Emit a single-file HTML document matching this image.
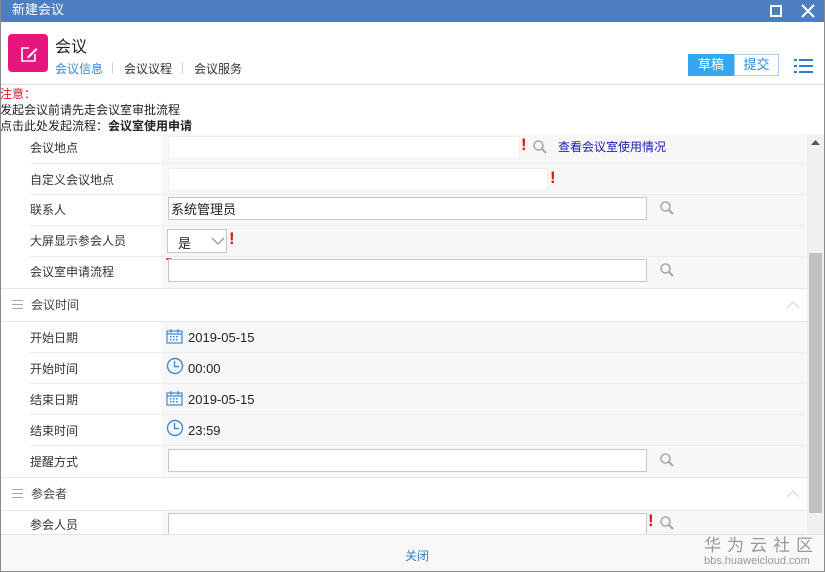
<!DOCTYPE html>
<html><head><meta charset="utf-8"><style>
*{margin:0;padding:0;box-sizing:border-box}
body{width:825px;height:572px;overflow:hidden;background:#fff;font-family:"Liberation Sans","Noto Sans CJK SC",sans-serif;font-size:12px;color:#333;position:relative}
.a{position:absolute;white-space:nowrap}
.win{position:absolute;left:0;top:0;width:825px;height:572px;border:1px solid #8a8a8a;border-top:none}
.tb{left:0;top:0;width:825px;height:22px;background:#4d7fc0;color:#fff;font-size:13px;line-height:20px;padding-left:12px}
.lbl{left:30px;font-size:12px;color:#333}
.inp{background:#fff;border:1px solid #c6c6c6;height:23px}
.ex{color:#e0141a;font-weight:bold;font-size:17px;font-family:"Liberation Sans",sans-serif}
.sep{left:30px;width:776px;height:1px;background:#ececec}
.val{left:161px;width:646px;background:#f7f7f7}
.sec{left:1px;width:806px;background:#fff;border-top:1px solid #e6e6e6;border-bottom:1px solid #e6e6e6}
.sec span{position:absolute;left:30px;top:7px;font-size:12px;color:#444}
.ham{position:absolute;left:11px;width:11px;height:1px;background:#aaa}
</style></head><body>
<div class="a tb">新建会议</div>
<svg class="a" style="left:770px;top:5px" width="12" height="12"><rect x="1" y="1" width="10" height="10" fill="none" stroke="#fff" stroke-width="2"/></svg>
<svg class="a" style="left:801px;top:4px" width="14" height="14"><path d="M1 1L13 13M13 1L1 13" stroke="#fff" stroke-width="2"/></svg>
<div class="a" style="left:8px;top:34px;width:40px;height:38px;background:#e6167e;border-radius:4px"></div>
<svg class="a" style="left:8px;top:34px" width="40" height="38"><path d="M21 14H14V27H27V20" fill="none" stroke="#fff" stroke-width="1.6"/><path d="M19 23L28 14L29.5 15.5L20.5 24.5Z" fill="#fff"/></svg>
<div class="a" style="left:55px;top:33px;font-size:16px;color:#222">会议</div>
<div class="a" style="left:55px;top:60px;font-size:12px;color:#2e8ad8">会议信息</div>
<div class="a" style="left:111px;top:60px;color:#ccc">|</div>
<div class="a" style="left:124px;top:60px;color:#333">会议议程</div>
<div class="a" style="left:181px;top:60px;color:#ccc">|</div>
<div class="a" style="left:194px;top:60px;color:#333">会议服务</div>
<div class="a" style="left:688px;top:54px;width:46px;height:22px;background:#35a7f2;color:#fff;text-align:center;line-height:21px;font-size:13px">草稿</div>
<div class="a" style="left:734px;top:54px;width:45px;height:22px;border:1px solid #a9cdea;color:#2e8ad8;text-align:center;line-height:19px;font-size:13px">提交</div>
<svg class="a" style="left:794px;top:58px" width="20" height="16"><g fill="#2e7fd0"><rect x="0" y="1" width="3" height="2"/><rect x="5" y="1" width="14" height="2"/><rect x="0" y="7" width="3" height="2"/><rect x="5" y="7" width="14" height="2"/><rect x="0" y="13" width="3" height="2"/><rect x="5" y="13" width="14" height="2"/></g></svg>
<div class="a" style="left:0;top:84px;width:825px;height:1px;background:#dcdcdc"></div>
<div class="a" style="left:0;top:85px;color:#e0141a">注意：</div>
<div class="a" style="left:0;top:101px;color:#222">发起会议前请先走会议室审批流程</div>
<div class="a" style="left:0;top:117px;color:#222">点击此处发起流程：<b>会议室使用申请</b></div>

<div class="a val" style="top:134px;height:154px"></div>
<div class="a val" style="top:322px;height:156px"></div>
<div class="a val" style="top:510px;height:25px"></div>
<div class="a sep" style="top:163px"></div><div class="a sep" style="top:194px"></div><div class="a sep" style="top:225px"></div><div class="a sep" style="top:256px"></div>
<div class="a sep" style="top:352px"></div><div class="a sep" style="top:383px"></div><div class="a sep" style="top:414px"></div><div class="a sep" style="top:445px"></div>

<div class="a lbl" style="top:139px">会议地点</div>
<div class="a inp" style="left:168px;top:136px;width:352px;border-color:#eee"></div>
<div class="a ex" style="left:521px;top:135px">!</div>
<svg class="a" style="left:533px;top:140px" width="14" height="14"><circle cx="5.5" cy="5.5" r="4.5" fill="none" stroke="#aaa" stroke-width="1.6"/><path d="M9 9L13 13" stroke="#aaa" stroke-width="2.2"/></svg>
<div class="a" style="left:558px;top:138px;color:#1a1ab8">查看会议室使用情况</div>

<div class="a lbl" style="top:171px">自定义会议地点</div>
<div class="a inp" style="left:168px;top:168px;width:380px;border-color:#eee"></div>
<div class="a ex" style="left:550px;top:168px">!</div>

<div class="a lbl" style="top:201px">联系人</div>
<div class="a inp" style="left:168px;top:197px;width:479px;padding:1px 2px;font-size:13px;color:#222">系统管理员</div>
<svg class="a" style="left:660px;top:201px" width="14" height="14"><circle cx="5.5" cy="5.5" r="4.5" fill="none" stroke="#aaa" stroke-width="1.6"/><path d="M9 9L13 13" stroke="#aaa" stroke-width="2.2"/></svg>

<div class="a lbl" style="top:232px">大屏显示参会人员</div>
<div class="a inp" style="left:167px;top:229px;width:60px;height:24px;padding:3px 10px;font-size:13px;color:#222">是</div>
<svg class="a" style="left:211px;top:237px" width="14" height="9"><path d="M1 1L7 7L13 1" fill="none" stroke="#999" stroke-width="1.3"/></svg>
<div class="a ex" style="left:229px;top:229px">!</div>

<div class="a lbl" style="top:263px">会议室申请流程</div>
<div class="a" style="left:166px;top:258px;width:5px;height:2px;background:#e55"></div>
<div class="a inp" style="left:168px;top:259px;width:479px"></div>
<svg class="a" style="left:660px;top:263px" width="14" height="14"><circle cx="5.5" cy="5.5" r="4.5" fill="none" stroke="#aaa" stroke-width="1.6"/><path d="M9 9L13 13" stroke="#aaa" stroke-width="2.2"/></svg>

<div class="a sec" style="top:288px;height:34px"><div class="ham" style="top:11px"></div><div class="ham" style="top:15px"></div><div class="ham" style="top:19px"></div><span>会议时间</span>
<svg style="position:absolute;left:785px;top:12px" width="14" height="8"><path d="M1 7L7 1L13 7" fill="none" stroke="#ddd" stroke-width="1.3"/></svg></div>

<div class="a lbl" style="top:329px">开始日期</div>
<svg class="a" style="left:166px;top:328px" width="17" height="16"><rect x="1" y="3" width="15" height="12" fill="none" stroke="#3f8ad6" stroke-width="1.2"/><path d="M1 6H16M5 1V5M12 1V5" stroke="#3f8ad6" stroke-width="1.2"/><g fill="#3f8ad6"><rect x="4" y="8" width="1.5" height="1.5"/><rect x="7" y="8" width="1.5" height="1.5"/><rect x="10" y="8" width="1.5" height="1.5"/><rect x="4" y="11" width="1.5" height="1.5"/><rect x="7" y="11" width="1.5" height="1.5"/><rect x="10" y="11" width="1.5" height="1.5"/></g></svg>
<div class="a" style="left:188px;top:330px;font-size:13px;color:#222">2019-05-15</div>
<div class="a lbl" style="top:360px">开始时间</div>
<svg class="a" style="left:166px;top:357px" width="18" height="18"><circle cx="9" cy="9" r="7.5" fill="none" stroke="#3f8ad6" stroke-width="1.4"/><path d="M8.5 4V9.5H13" fill="none" stroke="#3f8ad6" stroke-width="1.4"/></svg>
<div class="a" style="left:188px;top:361px;font-size:13px;color:#222">00:00</div>
<div class="a lbl" style="top:391px">结束日期</div>
<svg class="a" style="left:166px;top:390px" width="17" height="16"><rect x="1" y="3" width="15" height="12" fill="none" stroke="#3f8ad6" stroke-width="1.2"/><path d="M1 6H16M5 1V5M12 1V5" stroke="#3f8ad6" stroke-width="1.2"/><g fill="#3f8ad6"><rect x="4" y="8" width="1.5" height="1.5"/><rect x="7" y="8" width="1.5" height="1.5"/><rect x="10" y="8" width="1.5" height="1.5"/><rect x="4" y="11" width="1.5" height="1.5"/><rect x="7" y="11" width="1.5" height="1.5"/><rect x="10" y="11" width="1.5" height="1.5"/></g></svg>
<div class="a" style="left:188px;top:392px;font-size:13px;color:#222">2019-05-15</div>
<div class="a lbl" style="top:422px">结束时间</div>
<svg class="a" style="left:166px;top:419px" width="18" height="18"><circle cx="9" cy="9" r="7.5" fill="none" stroke="#3f8ad6" stroke-width="1.4"/><path d="M8.5 4V9.5H13" fill="none" stroke="#3f8ad6" stroke-width="1.4"/></svg>
<div class="a" style="left:188px;top:423px;font-size:13px;color:#222">23:59</div>

<div class="a lbl" style="top:453px">提醒方式</div>
<div class="a inp" style="left:168px;top:449px;width:479px"></div>
<svg class="a" style="left:660px;top:453px" width="14" height="14"><circle cx="5.5" cy="5.5" r="4.5" fill="none" stroke="#aaa" stroke-width="1.6"/><path d="M9 9L13 13" stroke="#aaa" stroke-width="2.2"/></svg>

<div class="a sec" style="top:477px;height:34px"><div class="ham" style="top:11px"></div><div class="ham" style="top:15px"></div><div class="ham" style="top:19px"></div><span>参会者</span>
<svg style="position:absolute;left:785px;top:12px" width="14" height="8"><path d="M1 7L7 1L13 7" fill="none" stroke="#ddd" stroke-width="1.3"/></svg></div>

<div class="a lbl" style="top:516px">参会人员</div>
<div class="a inp" style="left:168px;top:513px;width:479px;border-bottom:none"></div>
<div class="a ex" style="left:648px;top:511px">!</div>
<svg class="a" style="left:660px;top:516px" width="14" height="14"><circle cx="5.5" cy="5.5" r="4.5" fill="none" stroke="#aaa" stroke-width="1.6"/><path d="M9 9L13 13" stroke="#aaa" stroke-width="2.2"/></svg>

<div class="a" style="left:807px;top:134px;width:17px;height:400px;background:#f0f0f0"></div>
<svg class="a" style="left:811px;top:140px" width="9" height="6"><path d="M0 5L4.5 0L9 5Z" fill="#555"/></svg>
<div class="a" style="left:809px;top:253px;width:13px;height:260px;background:#c1c1c1"></div>

<div class="a" style="left:1px;top:534px;width:823px;height:37px;background:#f8f8f8;border-top:1px solid #e2e2e2"></div>
<div class="a" style="left:405px;top:547px;color:#2e7fd0">关闭</div>
<div class="a" style="left:704px;top:531px;font-size:17px;color:#999;letter-spacing:6px">华为云社区</div>
<div class="a" style="left:704px;top:555px;font-size:11px;color:#999">bbs.huaweicloud.com</div>
<div class="win"></div>
</body></html>
